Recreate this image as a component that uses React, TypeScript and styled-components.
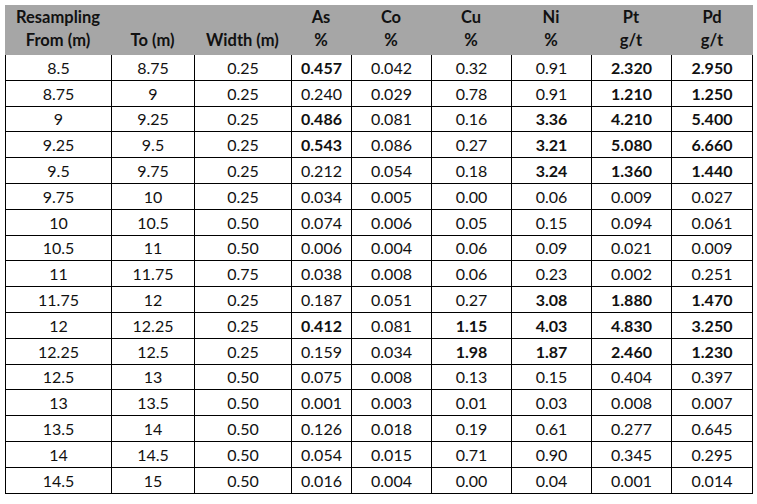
import React from 'react';
import styled, { createGlobalStyle } from 'styled-components';

const Global = createGlobalStyle`
  html, body { margin: 0; padding: 0; background: #ffffff; }
  body { font-family: Lato, "Open Sans", "Liberation Sans", sans-serif; color: #000; }
`;

const Page = styled.div`
  padding: 5px 0 0 5px;
`;

const Sheet = styled.div`
  width: 748px;
`;

const Header = styled.div`
  display: grid;
  grid-template-columns: 106px 83px 97px 60px 80px 80px 80px 80px 82px;
  background: #a6a6a6;
  height: 50px;
`;

const HeadCell = styled.div`
  display: flex;
  flex-direction: column;
  align-items: center;
  padding-top: 1px;
  font-weight: 700;
  font-size: 16.5px;
  line-height: 23px;
  color: #111;
  white-space: nowrap;
`;

const HeadLine = styled.span`
  display: block;
  height: 23px;
`;

const Body = styled.div`
  display: grid;
  grid-template-columns: 105px 82px 96px 59px 79px 79px 79px 79px 80px;
  grid-auto-rows: 24.8px;
  gap: 1px;
  background: #000;
  padding: 0 1px 1px 1px;
`;

const Cell = styled.div<{ $bold?: boolean }>`
  background: #fff;
  display: flex;
  align-items: flex-end;
  justify-content: center;
  padding-bottom: 3px;
  box-sizing: border-box;
  font-size: 16px;
  line-height: 18px;
  font-weight: ${(p) => (p.$bold ? 700 : 400)};
  color: #111;
`;

const headers: [string, string][] = [
  ['Resampling', 'From (m)'],
  ['', 'To (m)'],
  ['', 'Width (m)'],
  ['As', '%'],
  ['Co', '%'],
  ['Cu', '%'],
  ['Ni', '%'],
  ['Pt', 'g/t'],
  ['Pd', 'g/t'],
];

const rows: string[][] = [
  ['8.5', '8.75', '0.25', '*0.457', '0.042', '0.32', '0.91', '*2.320', '*2.950'],
  ['8.75', '9', '0.25', '0.240', '0.029', '0.78', '0.91', '*1.210', '*1.250'],
  ['9', '9.25', '0.25', '*0.486', '0.081', '0.16', '*3.36', '*4.210', '*5.400'],
  ['9.25', '9.5', '0.25', '*0.543', '0.086', '0.27', '*3.21', '*5.080', '*6.660'],
  ['9.5', '9.75', '0.25', '0.212', '0.054', '0.18', '*3.24', '*1.360', '*1.440'],
  ['9.75', '10', '0.25', '0.034', '0.005', '0.00', '0.06', '0.009', '0.027'],
  ['10', '10.5', '0.50', '0.074', '0.006', '0.05', '0.15', '0.094', '0.061'],
  ['10.5', '11', '0.50', '0.006', '0.004', '0.06', '0.09', '0.021', '0.009'],
  ['11', '11.75', '0.75', '0.038', '0.008', '0.06', '0.23', '0.002', '0.251'],
  ['11.75', '12', '0.25', '0.187', '0.051', '0.27', '*3.08', '*1.880', '*1.470'],
  ['12', '12.25', '0.25', '*0.412', '0.081', '*1.15', '*4.03', '*4.830', '*3.250'],
  ['12.25', '12.5', '0.25', '0.159', '0.034', '*1.98', '*1.87', '*2.460', '*1.230'],
  ['12.5', '13', '0.50', '0.075', '0.008', '0.13', '0.15', '0.404', '0.397'],
  ['13', '13.5', '0.50', '0.001', '0.003', '0.01', '0.03', '0.008', '0.007'],
  ['13.5', '14', '0.50', '0.126', '0.018', '0.19', '0.61', '0.277', '0.645'],
  ['14', '14.5', '0.50', '0.054', '0.015', '0.71', '0.90', '0.345', '0.295'],
  ['14.5', '15', '0.50', '0.016', '0.004', '0.00', '0.04', '0.001', '0.014'],
];

export default function App() {
  return (
    <Page>
      <Global />
      <Sheet>
        <Header>
          {headers.map(([a, b], i) => (
            <HeadCell key={i}>
              <HeadLine>{a}</HeadLine>
              <HeadLine>{b}</HeadLine>
            </HeadCell>
          ))}
        </Header>
        <Body>
          {rows.map((r, ri) =>
            r.map((v, ci) => {
              const bold = v.startsWith('*');
              return (
                <Cell key={`${ri}-${ci}`} $bold={bold}>
                  {bold ? v.slice(1) : v}
                </Cell>
              );
            })
          )}
        </Body>
      </Sheet>
    </Page>
  );
}
